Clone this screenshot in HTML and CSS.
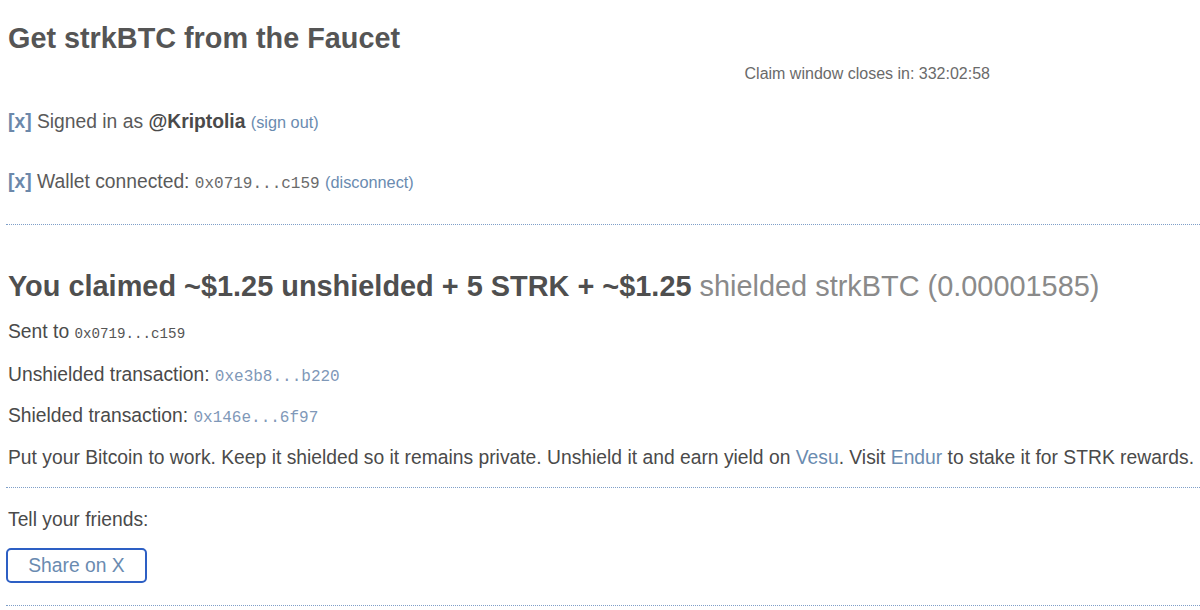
FILE: index.html
```html
<!DOCTYPE html>
<html lang="en">
<head>
<meta charset="utf-8">
<title>Get strkBTC from the Faucet</title>
<link rel="stylesheet" href="styles.css">
</head>
<body>
<main class="page">
  <header class="header">
    <h1 class="title">Get strkBTC from the Faucet</h1>
    <div class="timer-row"><span class="timer">Claim window closes in: 332:02:58</span></div>
  </header>
  <section class="status">
    <p class="status-line signed"><span class="check">[x]</span> Signed in as <b class="user">@Kriptolia</b> <a class="small-link" href="#">(sign out)</a></p>
    <p class="status-line wallet"><span class="check">[x]</span> Wallet connected: <code class="addr">0x0719...c159</code> <a class="small-link" href="#">(disconnect)</a></p>
  </section>
  <hr class="rule">
  <section class="claim">
    <h2 class="claim-title">You claimed ~$1.25 unshielded + 5 STRK + ~$1.25 <span class="muted">shielded strkBTC (0.00001585)</span></h2>
    <p class="line sent">Sent to <code class="addr sm">0x0719...c159</code></p>
    <p class="line unsh">Unshielded transaction: <a class="addr tx" href="#">0xe3b8...b220</a></p>
    <p class="line shd">Shielded transaction: <a class="addr tx" href="#">0x146e...6f97</a></p>
    <p class="line put">Put your Bitcoin to work. Keep it shielded so it remains private. Unshield it and earn yield on <a class="link" href="#">Vesu</a>. Visit <a class="link" href="#">Endur</a> to stake it for STRK rewards.</p>
  </section>
  <hr class="rule">
  <section class="share">
    <p class="line">Tell your friends:</p>
    <button class="share-btn" type="button">Share on X</button>
  </section>
  <hr class="rule">
</main>
</body>
</html>
```

FILE: styles.css
```css
* { box-sizing: border-box; }
html, body { margin: 0; padding: 0; background: #ffffff; }
body {
  font-family: "Liberation Sans", Arial, sans-serif;
  color: #4a4a4a;
  font-size: 19.3px;
}
.page { padding: 0 0 0 8px; }

.header { padding-top: 21px; }
.title {
  margin: 0;
  font-size: 28.8px;
  line-height: 34px;
  font-weight: bold;
  color: #555555;
}
.timer-row {
  display: flex;
  justify-content: flex-end;
  width: 982px;
  margin-top: 9px;
}
.timer {
  font-size: 16px;
  line-height: 20px;
  color: #6a6a6a;
}

.status { margin-top: 26px; }
.status-line {
  margin: 0;
  line-height: 24px;
  color: #5a5a5a;
}
.status-line.wallet { margin-top: 36px; }
.check { color: #6c88aa; font-weight: bold; }
.user { color: #4a4a4a; }
.small-link {
  color: #6a8bb0;
  text-decoration: none;
  font-size: 16.3px;
}
.addr {
  font-family: "Liberation Mono", "Courier New", monospace;
  font-size: 16px;
  color: #6a6a6a;
}
.addr.sm { font-size: 14.2px; color: #555; }
.addr.tx { font-size: 16px; color: #7f98b8; text-decoration: none; }

.rule {
  margin: 28px 0 0 -2px;
  border: 0;
  border-top: 1px dotted #7f9fc8;
  height: 0;
}

.claim { padding-top: 44px; }
.claim-title {
  margin: 0;
  font-size: 28.9px;
  line-height: 34px;
  font-weight: bold;
  color: #4f4f4f;
}
.muted { font-weight: normal; color: #8a8a8a; }
.line {
  margin: 0;
  line-height: 24px;
}
.line.sent { margin-top: 17px; }
.line.unsh { margin-top: 17px; }
.line.shd { margin-top: 15px; }
.line.put { margin-top: 16px; }
.link { color: #6a8bb0; text-decoration: none; }

.claim + .rule { margin-top: 17px; }
.share { padding-top: 20px; }
.share-btn {
  display: block;
  margin: 16px 0 0 -2px;
  width: 141px;
  height: 35px;
  border: 2px solid #2d5fc4;
  border-radius: 5px;
  background: #ffffff;
  color: #6a8bb0;
  font-family: "Liberation Sans", Arial, sans-serif;
  font-size: 19.3px;
  padding: 0;
}
.share + .rule { margin-top: 22px; }
```
